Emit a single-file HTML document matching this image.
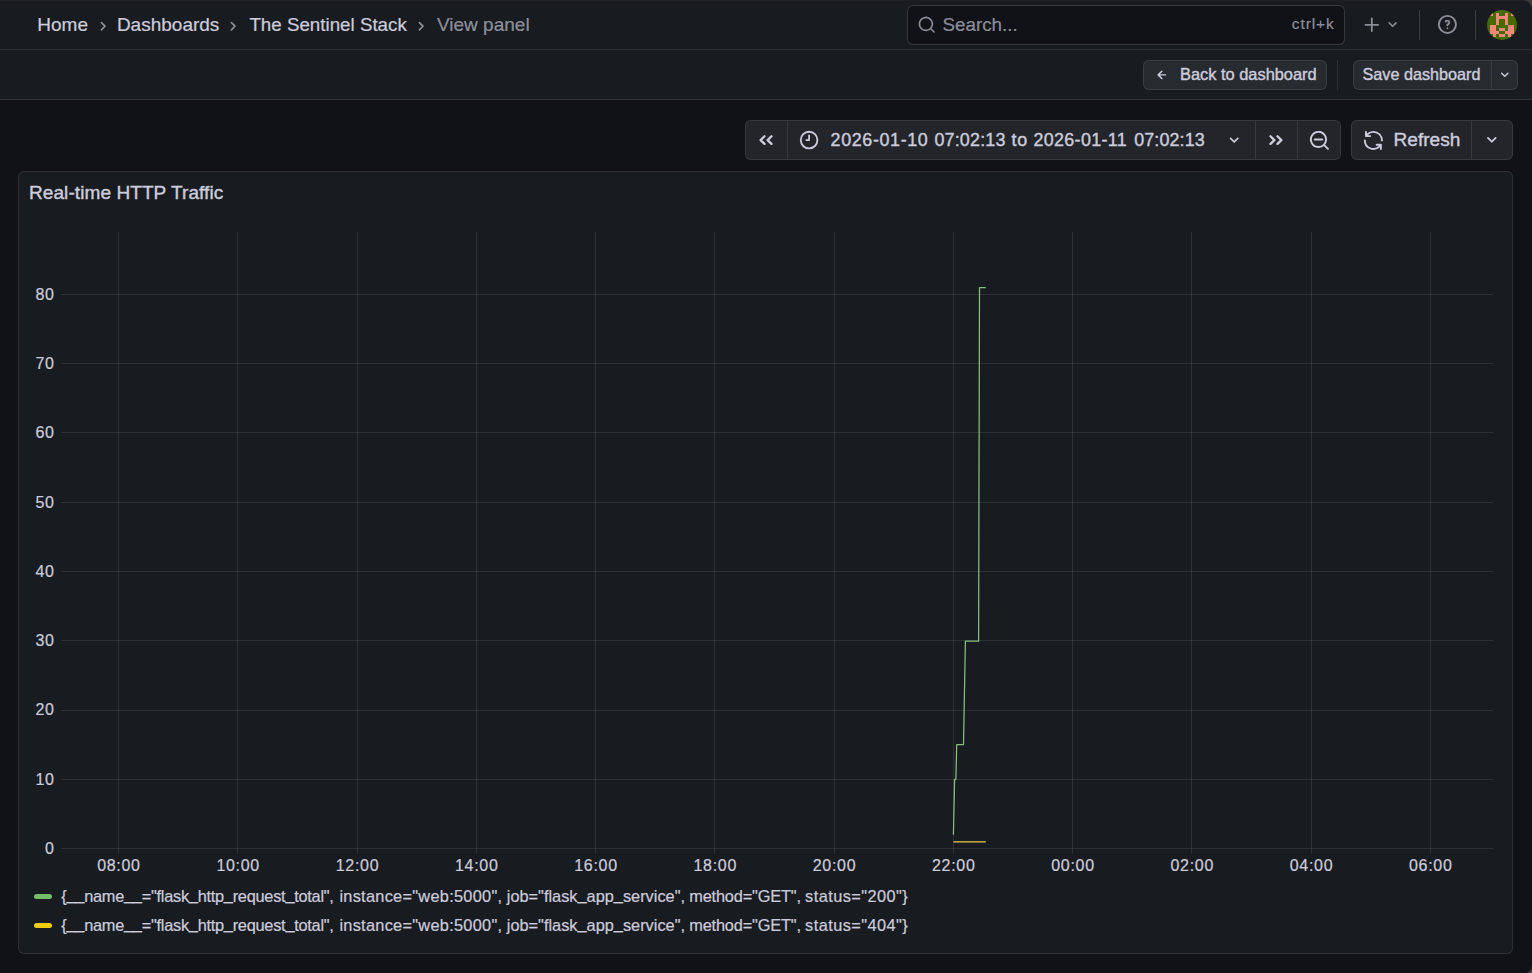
<!DOCTYPE html>
<html><head><meta charset="utf-8"><style>
html,body{margin:0;padding:0;width:1532px;height:973px;overflow:hidden;background:#111217;}
body{position:relative;font-family:"Liberation Sans", sans-serif;}
.t{position:absolute;white-space:pre;line-height:1;-webkit-text-stroke:0.22px currentColor;}
svg{display:block;}
</style></head><body>
<div style="position:absolute;left:0;top:0;width:1532px;height:49px;background:#181b1f;border-bottom:1px solid rgba(204,204,220,0.12)"></div><div style="position:absolute;left:0;top:50px;width:1532px;height:49px;background:#181b1f;border-bottom:1px solid rgba(204,204,220,0.12)"></div><div class="t" style="left:37.30px;top:15px;font-size:19px;color:#ccccdc;font-weight:normal;">Home</div>
<div class="t" style="left:116.90px;top:15px;font-size:19px;color:#ccccdc;font-weight:normal;">Dashboards</div>
<div class="t" style="left:249.40px;top:16px;font-size:18.75px;color:#ccccdc;font-weight:normal;">The Sentinel Stack</div>
<div class="t" style="left:437.00px;top:15px;font-size:19px;color:rgba(204,204,220,0.65);font-weight:normal;">View panel</div>
<svg style="position:absolute;left:92.65px;top:15.95px" width="20.40" height="20.40" viewBox="0 0 24 24"><path fill="rgba(204,204,220,0.65)" d="M14.83,11.29,10.59,7.05a1,1,0,0,0-1.42,0,1,1,0,0,0,0,1.41L12.71,12,9.170,15.54a1,1,0,0,0,0,1.41,1,1,0,0,0,.71.29,1,1,0,0,0,.71-.29l4.24-4.24A1,1,0,0,0,14.83,11.29Z"/></svg>
<svg style="position:absolute;left:222.95px;top:15.95px" width="20.40" height="20.40" viewBox="0 0 24 24"><path fill="rgba(204,204,220,0.65)" d="M14.83,11.29,10.59,7.05a1,1,0,0,0-1.42,0,1,1,0,0,0,0,1.41L12.71,12,9.170,15.54a1,1,0,0,0,0,1.41,1,1,0,0,0,.71.29,1,1,0,0,0,.71-.29l4.24-4.24A1,1,0,0,0,14.83,11.29Z"/></svg>
<svg style="position:absolute;left:411.35px;top:15.95px" width="20.40" height="20.40" viewBox="0 0 24 24"><path fill="rgba(204,204,220,0.65)" d="M14.83,11.29,10.59,7.05a1,1,0,0,0-1.42,0,1,1,0,0,0,0,1.41L12.71,12,9.170,15.54a1,1,0,0,0,0,1.41,1,1,0,0,0,.71.29,1,1,0,0,0,.71-.29l4.24-4.24A1,1,0,0,0,14.83,11.29Z"/></svg>
<div style="position:absolute;left:907px;top:5px;width:436px;height:38px;border:1px solid rgba(204,204,220,0.2);border-radius:6px;background:#111217"></div><svg style="position:absolute;left:917.20px;top:15.10px" width="19.44" height="19.44" viewBox="0 0 24 24"><path fill="rgba(204,204,220,0.65)" d="M21.71,20.29,18,16.61A9,9,0,1,0,16.61,18l3.68,3.68a1,1,0,0,0,1.42,0A1,1,0,0,0,21.71,20.29ZM11,18a7,7,0,1,1,7-7A7,7,0,0,1,11,18Z"/></svg>
<div class="t" style="left:942.50px;top:16px;font-size:18.8px;color:rgba(204,204,220,0.65);font-weight:normal;">Search...</div>
<div class="t" style="left:1291.80px;top:16px;font-size:15.4px;color:rgba(204,204,220,0.65);font-weight:normal;letter-spacing:0.95px">ctrl+k</div>
<svg style="position:absolute;left:1361.40px;top:13.60px" width="21.60" height="21.60" viewBox="0 0 24 24"><path fill="rgba(204,204,220,0.65)" d="M19,11H13V5a1,1,0,0,0-2,0v6H5a1,1,0,0,0,0,2h6v6a1,1,0,0,0,2,0V13h6a1,1,0,0,0,0-2Z"/></svg>
<svg style="position:absolute;left:1383.10px;top:14.90px" width="19.20" height="19.20" viewBox="0 0 24 24"><path fill="rgba(204,204,220,0.65)" d="M17,9.17a1,1,0,0,0-1.41,0L12,12.71,8.46,9.17a1,1,0,0,0-1.41,0,1,1,0,0,0,0,1.42l4.24,4.24a1,1,0,0,0,1.42,0L17,10.59A1,1,0,0,0,17,9.17Z"/></svg>
<div style="position:absolute;left:1419px;top:10px;width:1px;height:30px;background:rgba(204,204,220,0.2)"></div><div style="position:absolute;left:1475px;top:10px;width:1px;height:30px;background:rgba(204,204,220,0.2)"></div><svg style="position:absolute;left:1436.00px;top:12.90px" width="22.80" height="22.80" viewBox="0 0 24 24"><path fill="rgba(204,204,220,0.65)" d="M11.29,15.29a1.58,1.58,0,0,0-.12.15.76.76,0,0,0-.09.18.64.64,0,0,0-.06.18,1.36,1.36,0,0,0,0,.2.84.84,0,0,0,.08.38.9.9,0,0,0,.54.54.94.94,0,0,0,.76,0,.9.9,0,0,0,.54-.54A1,1,0,0,0,13,16a1,1,0,0,0-.29-.71A1,1,0,0,0,11.29,15.29ZM12,2A10,10,0,1,0,22,12,10,10,0,0,0,12,2Zm0,18a8,8,0,1,1,8-8A8,8,0,0,1,12,20ZM12,7A3,3,0,0,0,9.4,8.5a1,1,0,1,0,1.73,1A1,1,0,0,1,12,9a1,1,0,0,1,0,2,1,1,0,0,0-1,1v1a1,1,0,0,0,2,0v-.18A3,3,0,0,0,12,7Z"/></svg>
<svg style="position:absolute;left:1487px;top:10px" width="30" height="30" viewBox="0 0 30 30"><defs><clipPath id="av"><circle cx="15" cy="15" r="15"/></clipPath></defs><g clip-path="url(#av)"><rect width="30" height="30" fill="#466b00"/><g transform="translate(3,3)" fill="#f4877a"><rect x="0" y="0" width="3" height="3"/><rect x="6" y="0" width="3" height="3"/><rect x="15" y="0" width="3" height="3"/><rect x="21" y="0" width="3" height="3"/><rect x="6" y="3" width="3" height="3"/><rect x="9" y="3" width="3" height="3"/><rect x="12" y="3" width="3" height="3"/><rect x="15" y="3" width="3" height="3"/><rect x="6" y="6" width="3" height="3"/><rect x="15" y="6" width="3" height="3"/><rect x="6" y="9" width="3" height="3"/><rect x="15" y="9" width="3" height="3"/><rect x="0" y="12" width="3" height="3"/><rect x="3" y="12" width="3" height="3"/><rect x="18" y="12" width="3" height="3"/><rect x="21" y="12" width="3" height="3"/><rect x="0" y="15" width="3" height="3"/><rect x="3" y="15" width="3" height="3"/><rect x="9" y="15" width="3" height="3"/><rect x="12" y="15" width="3" height="3"/><rect x="18" y="15" width="3" height="3"/><rect x="21" y="15" width="3" height="3"/><rect x="0" y="18" width="3" height="3"/><rect x="3" y="18" width="3" height="3"/><rect x="6" y="18" width="3" height="3"/><rect x="15" y="18" width="3" height="3"/><rect x="18" y="18" width="3" height="3"/><rect x="21" y="18" width="3" height="3"/><rect x="3" y="21" width="3" height="3"/><rect x="9" y="21" width="3" height="3"/><rect x="12" y="21" width="3" height="3"/><rect x="18" y="21" width="3" height="3"/></g></g></svg><div style="position:absolute;left:1143px;top:60px;width:182px;height:28px;border:1px solid rgba(204,204,220,0.12);border-radius:6px;background:rgba(204,204,220,0.085)"></div><svg style="position:absolute;left:1152.56px;top:65.86px" width="17.76" height="17.76" viewBox="0 0 24 24"><path fill="#ccccdc" d="M17,11H9.41l3.3-3.29a1,1,0,1,0-1.42-1.42l-5,5a1,1,0,0,0-.21.33,1,1,0,0,0,0,.76,1,1,0,0,0,.21.33l5,5a1,1,0,0,0,1.42,0,1,1,0,0,0,0-1.42L9.41,13H17a1,1,0,0,0,0-2Z"/></svg>
<div class="t" style="left:1180.00px;top:66px;font-size:16.4px;color:#ccccdc;font-weight:normal;-webkit-text-stroke:0.4px currentColor">Back to dashboard</div>
<div style="position:absolute;left:1337px;top:60px;width:1px;height:30px;background:rgba(204,204,220,0.12)"></div><div style="position:absolute;left:1353px;top:60px;width:163px;height:28px;border:1px solid rgba(204,204,220,0.12);border-radius:6px;background:rgba(204,204,220,0.085)"></div><div style="position:absolute;left:1491px;top:61px;width:1px;height:28px;background:rgba(204,204,220,0.12)"></div><div class="t" style="left:1362.50px;top:66px;font-size:16.2px;color:#ccccdc;font-weight:normal;-webkit-text-stroke:0.4px currentColor">Save dashboard</div>
<svg style="position:absolute;left:1496.07px;top:66.10px" width="17.52" height="17.52" viewBox="0 0 24 24"><path fill="#ccccdc" d="M17,9.17a1,1,0,0,0-1.41,0L12,12.71,8.46,9.17a1,1,0,0,0-1.41,0,1,1,0,0,0,0,1.42l4.24,4.24a1,1,0,0,0,1.42,0L17,10.59A1,1,0,0,0,17,9.17Z"/></svg>
<div style="position:absolute;left:745px;top:120px;width:594px;height:38px;border:1px solid rgba(204,204,220,0.12);border-radius:6px;background:rgba(204,204,220,0.10)"></div><div style="position:absolute;left:787px;top:121px;width:1px;height:38px;background:rgba(204,204,220,0.12)"></div><div style="position:absolute;left:1255px;top:121px;width:1px;height:38px;background:rgba(204,204,220,0.12)"></div><div style="position:absolute;left:1297px;top:121px;width:1px;height:38px;background:rgba(204,204,220,0.12)"></div><svg style="position:absolute;left:0;top:0;overflow:visible" width="1" height="1"><path d="M764.5 136.3 L760.6 140.1 L764.5 143.9 M771.5 136.3 L767.6 140.1 L771.5 143.9" fill="none" stroke="#ccccdc" stroke-width="2.3" stroke-linecap="round" stroke-linejoin="round"/><path d="M1270.5 136.3 L1274.4 140.1 L1270.5 143.9 M1277.5 136.3 L1281.4 140.1 L1277.5 143.9" fill="none" stroke="#ccccdc" stroke-width="2.3" stroke-linecap="round" stroke-linejoin="round"/></svg><svg style="position:absolute;left:798.15px;top:129.35px" width="22.20" height="22.20" viewBox="0 0 24 24"><path fill="#ccccdc" d="M12,2A10,10,0,1,0,22,12,10.01114,10.01114,0,0,0,12,2Zm0,18a8,8,0,1,1,8-8A8.00917,8.00917,0,0,1,12,20Zm0-14a.99943.99943,0,0,0-1,1v4H9a1,1,0,0,0,0,2h3a.99943.99943,0,0,0,1-1V7A.99943.99943,0,0,0,12,6Z"/></svg>
<div class="t" style="left:830.60px;top:132px;font-size:17.9px;color:#ccccdc;font-weight:normal;-webkit-text-stroke:0.4px currentColor;letter-spacing:0.626px">2026-01-10</div>
<div class="t" style="left:934.40px;top:132px;font-size:17.9px;color:#ccccdc;font-weight:normal;-webkit-text-stroke:0.4px currentColor;letter-spacing:0.201px">07:02:13</div>
<div class="t" style="left:1011.60px;top:132px;font-size:17.9px;color:#ccccdc;font-weight:normal;-webkit-text-stroke:0.4px currentColor;letter-spacing:0.729px">to</div>
<div class="t" style="left:1033.50px;top:132px;font-size:17.9px;color:#ccccdc;font-weight:normal;-webkit-text-stroke:0.4px currentColor;letter-spacing:0.329px">2026-01-11</div>
<div class="t" style="left:1134.20px;top:132px;font-size:17.9px;color:#ccccdc;font-weight:normal;-webkit-text-stroke:0.4px currentColor;letter-spacing:0.130px">07:02:13</div>
<svg style="position:absolute;left:1223.95px;top:129.55px" width="20.40" height="20.40" viewBox="0 0 24 24"><path fill="#ccccdc" d="M17,9.17a1,1,0,0,0-1.41,0L12,12.71,8.46,9.17a1,1,0,0,0-1.41,0,1,1,0,0,0,0,1.42l4.24,4.24a1,1,0,0,0,1.42,0L17,10.59A1,1,0,0,0,17,9.17Z"/></svg>
<svg style="position:absolute;left:1308.00px;top:128.80px" width="22.80" height="22.80" viewBox="0 0 24 24"><path fill="#ccccdc" d="M21.71,20.29,18,16.61A9,9,0,1,0,16.61,18l3.68,3.68a1,1,0,0,0,1.42,0A1,1,0,0,0,21.71,20.29ZM11,18a7,7,0,1,1,7-7A7,7,0,0,1,11,18Zm4-8H7a1,1,0,0,0,0,2h8a1,1,0,0,0,0-2Z"/></svg>
<div style="position:absolute;left:1351px;top:120px;width:160px;height:38px;border:1px solid rgba(204,204,220,0.12);border-radius:6px;background:rgba(204,204,220,0.10)"></div><div style="position:absolute;left:1471px;top:121px;width:1px;height:38px;background:rgba(204,204,220,0.12)"></div><svg style="position:absolute;left:1361.90px;top:129.00px" width="22.80" height="22.80" viewBox="0 0 24 24"><path fill="#ccccdc" d="M19.91,15.51H15.38a1,1,0,0,0,0,2h2.4A8,8,0,0,1,4,12a1,1,0,0,0-2,0,10,10,0,0,0,16.88,7.23V21a1,1,0,0,0,2,0V16.5A1,1,0,0,0,19.91,15.51ZM12,2A10,10,0,0,0,5.12,4.77V3a1,1,0,0,0-2,0V7.5a1,1,0,0,0,1,1h4.5a1,1,0,0,0,0-2H6.22A8,8,0,0,1,20,12a1,1,0,0,0,2,0A10,10,0,0,0,12,2Z"/></svg>
<div class="t" style="left:1393.50px;top:130px;font-size:19.1px;color:#ccccdc;font-weight:normal;-webkit-text-stroke:0.4px currentColor">Refresh</div>
<svg style="position:absolute;left:1481.40px;top:129.00px" width="21.60" height="21.60" viewBox="0 0 24 24"><path fill="#ccccdc" d="M17,9.17a1,1,0,0,0-1.41,0L12,12.71,8.46,9.17a1,1,0,0,0-1.41,0,1,1,0,0,0,0,1.42l4.24,4.24a1,1,0,0,0,1.42,0L17,10.59A1,1,0,0,0,17,9.17Z"/></svg>
<div style="position:absolute;left:18px;top:171px;width:1493px;height:781px;border:1px solid rgba(204,204,220,0.12);border-radius:6px;background:#181b1f"></div><div class="t" style="left:29.00px;top:183px;font-size:19.05px;color:#ccccdc;font-weight:normal;-webkit-text-stroke:0.4px currentColor;letter-spacing:0.07px">Real-time HTTP Traffic</div>
<svg style="position:absolute;left:0;top:0" width="1532" height="973" viewBox="0 0 1532 973"><line x1="61" y1="848.5" x2="1493" y2="848.5" stroke="rgba(204,204,220,0.12)" stroke-width="1"/><line x1="61" y1="779.5" x2="1493" y2="779.5" stroke="rgba(204,204,220,0.12)" stroke-width="1"/><line x1="61" y1="710.5" x2="1493" y2="710.5" stroke="rgba(204,204,220,0.12)" stroke-width="1"/><line x1="61" y1="640.5" x2="1493" y2="640.5" stroke="rgba(204,204,220,0.12)" stroke-width="1"/><line x1="61" y1="571.5" x2="1493" y2="571.5" stroke="rgba(204,204,220,0.12)" stroke-width="1"/><line x1="61" y1="502.5" x2="1493" y2="502.5" stroke="rgba(204,204,220,0.12)" stroke-width="1"/><line x1="61" y1="432.5" x2="1493" y2="432.5" stroke="rgba(204,204,220,0.12)" stroke-width="1"/><line x1="61" y1="363.5" x2="1493" y2="363.5" stroke="rgba(204,204,220,0.12)" stroke-width="1"/><line x1="61" y1="294.5" x2="1493" y2="294.5" stroke="rgba(204,204,220,0.12)" stroke-width="1"/><line x1="118.5" y1="232" x2="118.5" y2="854" stroke="rgba(204,204,220,0.12)" stroke-width="1"/><line x1="237.5" y1="232" x2="237.5" y2="854" stroke="rgba(204,204,220,0.12)" stroke-width="1"/><line x1="357.5" y1="232" x2="357.5" y2="854" stroke="rgba(204,204,220,0.12)" stroke-width="1"/><line x1="476.5" y1="232" x2="476.5" y2="854" stroke="rgba(204,204,220,0.12)" stroke-width="1"/><line x1="595.5" y1="232" x2="595.5" y2="854" stroke="rgba(204,204,220,0.12)" stroke-width="1"/><line x1="714.5" y1="232" x2="714.5" y2="854" stroke="rgba(204,204,220,0.12)" stroke-width="1"/><line x1="834.5" y1="232" x2="834.5" y2="854" stroke="rgba(204,204,220,0.12)" stroke-width="1"/><line x1="953.5" y1="232" x2="953.5" y2="854" stroke="rgba(204,204,220,0.12)" stroke-width="1"/><line x1="1072.5" y1="232" x2="1072.5" y2="854" stroke="rgba(204,204,220,0.12)" stroke-width="1"/><line x1="1191.5" y1="232" x2="1191.5" y2="854" stroke="rgba(204,204,220,0.12)" stroke-width="1"/><line x1="1311.5" y1="232" x2="1311.5" y2="854" stroke="rgba(204,204,220,0.12)" stroke-width="1"/><line x1="1430.5" y1="232" x2="1430.5" y2="854" stroke="rgba(204,204,220,0.12)" stroke-width="1"/><polyline points="953.4,834.8 954.6,779.3 955.9,779.3 956.7,744.5 963.5,744.5 965.4,641.2 978.6,641.2 979.5,287.6 985.8,287.6" fill="none" stroke="#86c07c" stroke-width="1.25" stroke-linejoin="round"/><line x1="953.4" y1="841.8" x2="985.8" y2="841.8" stroke="#ead24e" stroke-width="1.3"/></svg><div class="t" style="left:0.00px;top:841px;font-size:16px;color:#ccccdc;font-weight:normal;width:54.6px;text-align:right;letter-spacing:0.6px">0</div>
<div class="t" style="left:0.00px;top:772px;font-size:16px;color:#ccccdc;font-weight:normal;width:54.6px;text-align:right;letter-spacing:0.6px">10</div>
<div class="t" style="left:0.00px;top:702px;font-size:16px;color:#ccccdc;font-weight:normal;width:54.6px;text-align:right;letter-spacing:0.6px">20</div>
<div class="t" style="left:0.00px;top:633px;font-size:16px;color:#ccccdc;font-weight:normal;width:54.6px;text-align:right;letter-spacing:0.6px">30</div>
<div class="t" style="left:0.00px;top:564px;font-size:16px;color:#ccccdc;font-weight:normal;width:54.6px;text-align:right;letter-spacing:0.6px">40</div>
<div class="t" style="left:0.00px;top:495px;font-size:16px;color:#ccccdc;font-weight:normal;width:54.6px;text-align:right;letter-spacing:0.6px">50</div>
<div class="t" style="left:0.00px;top:425px;font-size:16px;color:#ccccdc;font-weight:normal;width:54.6px;text-align:right;letter-spacing:0.6px">60</div>
<div class="t" style="left:0.00px;top:356px;font-size:16px;color:#ccccdc;font-weight:normal;width:54.6px;text-align:right;letter-spacing:0.6px">70</div>
<div class="t" style="left:0.00px;top:287px;font-size:16px;color:#ccccdc;font-weight:normal;width:54.6px;text-align:right;letter-spacing:0.6px">80</div>
<div class="t" style="left:58.95px;top:858px;font-size:16px;color:#ccccdc;font-weight:normal;width:120px;text-align:center;letter-spacing:0.7px">08:00</div>
<div class="t" style="left:178.21px;top:858px;font-size:16px;color:#ccccdc;font-weight:normal;width:120px;text-align:center;letter-spacing:0.7px">10:00</div>
<div class="t" style="left:297.47px;top:858px;font-size:16px;color:#ccccdc;font-weight:normal;width:120px;text-align:center;letter-spacing:0.7px">12:00</div>
<div class="t" style="left:416.73px;top:858px;font-size:16px;color:#ccccdc;font-weight:normal;width:120px;text-align:center;letter-spacing:0.7px">14:00</div>
<div class="t" style="left:535.99px;top:858px;font-size:16px;color:#ccccdc;font-weight:normal;width:120px;text-align:center;letter-spacing:0.7px">16:00</div>
<div class="t" style="left:655.25px;top:858px;font-size:16px;color:#ccccdc;font-weight:normal;width:120px;text-align:center;letter-spacing:0.7px">18:00</div>
<div class="t" style="left:774.51px;top:858px;font-size:16px;color:#ccccdc;font-weight:normal;width:120px;text-align:center;letter-spacing:0.7px">20:00</div>
<div class="t" style="left:893.77px;top:858px;font-size:16px;color:#ccccdc;font-weight:normal;width:120px;text-align:center;letter-spacing:0.7px">22:00</div>
<div class="t" style="left:1013.03px;top:858px;font-size:16px;color:#ccccdc;font-weight:normal;width:120px;text-align:center;letter-spacing:0.7px">00:00</div>
<div class="t" style="left:1132.29px;top:858px;font-size:16px;color:#ccccdc;font-weight:normal;width:120px;text-align:center;letter-spacing:0.7px">02:00</div>
<div class="t" style="left:1251.55px;top:858px;font-size:16px;color:#ccccdc;font-weight:normal;width:120px;text-align:center;letter-spacing:0.7px">04:00</div>
<div class="t" style="left:1370.81px;top:858px;font-size:16px;color:#ccccdc;font-weight:normal;width:120px;text-align:center;letter-spacing:0.7px">06:00</div>
<div style="position:absolute;left:34px;top:894px;width:18px;height:5px;border-radius:3px;background:#73BF69"></div><div style="position:absolute;left:34px;top:923px;width:18px;height:5px;border-radius:3px;background:#F2CC0C"></div><div class="t" style="left:61.30px;top:888px;font-size:16.34px;color:#ccccdc;font-weight:normal;letter-spacing:-0.253px">{<span style="position:relative;top:-2px">_</span><span style="position:relative;top:-2px">_</span>name<span style="position:relative;top:-2px">_</span><span style="position:relative;top:-2px">_</span>="flask<span style="position:relative;top:-2px">_</span>http<span style="position:relative;top:-2px">_</span>request<span style="position:relative;top:-2px">_</span>total",</div>
<div class="t" style="left:339.40px;top:888px;font-size:16.34px;color:#ccccdc;font-weight:normal;letter-spacing:0.281px">instance="web:5000",</div>
<div class="t" style="left:506.80px;top:888px;font-size:16.34px;color:#ccccdc;font-weight:normal;letter-spacing:0px">job="flask<span style="position:relative;top:-2px">_</span>app<span style="position:relative;top:-2px">_</span>service",</div>
<div class="t" style="left:689.20px;top:888px;font-size:16.34px;color:#ccccdc;font-weight:normal;letter-spacing:-0.155px">method="GET",</div>
<div class="t" style="left:805.10px;top:888px;font-size:16.34px;color:#ccccdc;font-weight:normal;letter-spacing:0.439px">status="200"}</div>
<div class="t" style="left:61.30px;top:917px;font-size:16.34px;color:#ccccdc;font-weight:normal;letter-spacing:-0.253px">{<span style="position:relative;top:-2px">_</span><span style="position:relative;top:-2px">_</span>name<span style="position:relative;top:-2px">_</span><span style="position:relative;top:-2px">_</span>="flask<span style="position:relative;top:-2px">_</span>http<span style="position:relative;top:-2px">_</span>request<span style="position:relative;top:-2px">_</span>total",</div>
<div class="t" style="left:339.40px;top:917px;font-size:16.34px;color:#ccccdc;font-weight:normal;letter-spacing:0.281px">instance="web:5000",</div>
<div class="t" style="left:506.80px;top:917px;font-size:16.34px;color:#ccccdc;font-weight:normal;letter-spacing:0px">job="flask<span style="position:relative;top:-2px">_</span>app<span style="position:relative;top:-2px">_</span>service",</div>
<div class="t" style="left:689.20px;top:917px;font-size:16.34px;color:#ccccdc;font-weight:normal;letter-spacing:-0.155px">method="GET",</div>
<div class="t" style="left:805.10px;top:917px;font-size:16.34px;color:#ccccdc;font-weight:normal;letter-spacing:0.439px">status="404"}</div>
<div style="position:absolute;left:0;top:0;width:1532px;height:1px;background:#201f24"></div><div style="position:absolute;right:0;top:0;width:10px;height:10px;background:#3d3d3d"></div><div style="position:absolute;right:0;top:0;width:10px;height:10px;background:#181b1f;border-top-right-radius:9px;box-shadow:inset 0 1px 0 rgba(255,255,255,0.035)"></div><div style="position:absolute;right:0;bottom:0;width:8px;height:8px;background:#3d3d3d"></div><div style="position:absolute;right:0;bottom:0;width:8px;height:8px;background:#111217;border-bottom-right-radius:7px"></div>
</body></html>
